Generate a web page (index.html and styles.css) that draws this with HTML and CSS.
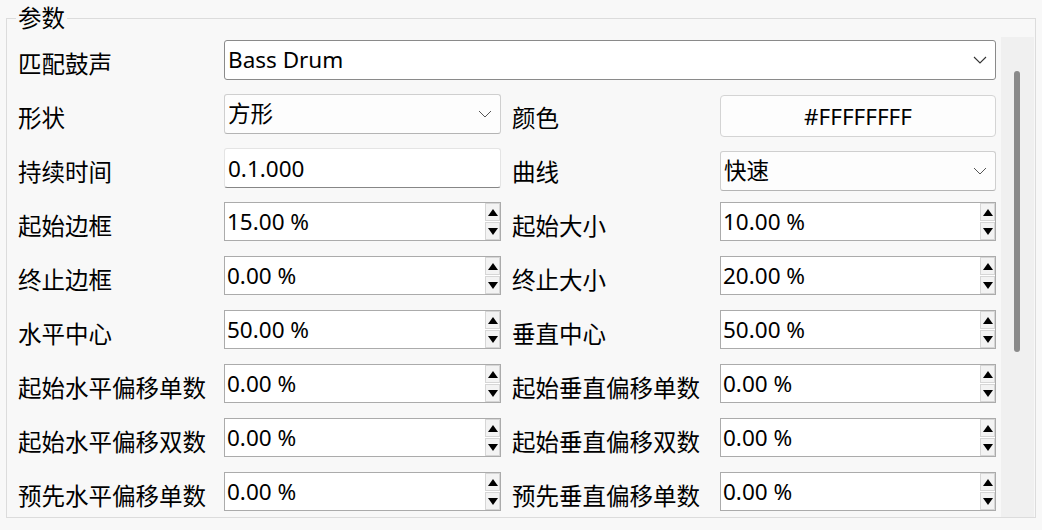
FILE: index.html
```html
<!DOCTYPE html>
<html lang="zh">
<head>
<meta charset="utf-8">
<link rel="stylesheet" href="styles.css">
</head>
<body>
<div class="group">
  <div class="group-title">参数</div>
  <div class="form">
    <div class="label">匹配鼓声</div>
    <div class="combo combo-main span3"><span class="val">Bass Drum</span><svg class="chev" width="14" height="8" viewBox="0 0 14 8"><path d="M1 1 L7 7 L13 1" fill="none" stroke="#333" stroke-width="1.1"/></svg></div>

    <div class="label">形状</div>
    <div class="combo"><span class="val">方形</span><svg class="chev" width="14" height="8" viewBox="0 0 14 8"><path d="M1 1 L7 7 L13 1" fill="none" stroke="#555" stroke-width="1"/></svg></div>
    <div class="label label-r">颜色</div>
    <div class="color-btn">#FFFFFFFF</div>

    <div class="label">持续时间</div>
    <div class="lineedit">0.1.000</div>
    <div class="label label-r">曲线</div>
    <div class="combo combo-shift"><span class="val">快速</span><svg class="chev" width="14" height="8" viewBox="0 0 14 8"><path d="M1 1 L7 7 L13 1" fill="none" stroke="#555" stroke-width="1"/></svg></div>

    <div class="label">起始边框</div>
    <div class="spin"><span class="val">15.00 %</span><div class="spin-btns"><div class="sb"><i class="up"></i></div><div class="sb"><i class="down"></i></div></div></div>
    <div class="label label-r">起始大小</div>
    <div class="spin"><span class="val">10.00 %</span><div class="spin-btns"><div class="sb"><i class="up"></i></div><div class="sb"><i class="down"></i></div></div></div>

    <div class="label">终止边框</div>
    <div class="spin"><span class="val">0.00 %</span><div class="spin-btns"><div class="sb"><i class="up"></i></div><div class="sb"><i class="down"></i></div></div></div>
    <div class="label label-r">终止大小</div>
    <div class="spin"><span class="val">20.00 %</span><div class="spin-btns"><div class="sb"><i class="up"></i></div><div class="sb"><i class="down"></i></div></div></div>

    <div class="label">水平中心</div>
    <div class="spin"><span class="val">50.00 %</span><div class="spin-btns"><div class="sb"><i class="up"></i></div><div class="sb"><i class="down"></i></div></div></div>
    <div class="label label-r">垂直中心</div>
    <div class="spin"><span class="val">50.00 %</span><div class="spin-btns"><div class="sb"><i class="up"></i></div><div class="sb"><i class="down"></i></div></div></div>

    <div class="label">起始水平偏移单数</div>
    <div class="spin"><span class="val">0.00 %</span><div class="spin-btns"><div class="sb"><i class="up"></i></div><div class="sb"><i class="down"></i></div></div></div>
    <div class="label label-r">起始垂直偏移单数</div>
    <div class="spin"><span class="val">0.00 %</span><div class="spin-btns"><div class="sb"><i class="up"></i></div><div class="sb"><i class="down"></i></div></div></div>

    <div class="label">起始水平偏移双数</div>
    <div class="spin"><span class="val">0.00 %</span><div class="spin-btns"><div class="sb"><i class="up"></i></div><div class="sb"><i class="down"></i></div></div></div>
    <div class="label label-r">起始垂直偏移双数</div>
    <div class="spin"><span class="val">0.00 %</span><div class="spin-btns"><div class="sb"><i class="up"></i></div><div class="sb"><i class="down"></i></div></div></div>

    <div class="label">预先水平偏移单数</div>
    <div class="spin"><span class="val">0.00 %</span><div class="spin-btns"><div class="sb"><i class="up"></i></div><div class="sb"><i class="down"></i></div></div></div>
    <div class="label label-r">预先垂直偏移单数</div>
    <div class="spin"><span class="val">0.00 %</span><div class="spin-btns"><div class="sb"><i class="up"></i></div><div class="sb"><i class="down"></i></div></div></div>
  </div>
  <div class="scrollbar"><div class="thumb"></div></div>
</div>
</body>
</html>
```

FILE: styles.css
```css
html, body {
  margin: 0;
  padding: 0;
  background: #f8f8f8;
}
body {
  width: 1042px;
  height: 530px;
  overflow: hidden;
  font-family: "Noto Sans", "Noto Sans CJK SC", sans-serif;
  color: #000;
}
.group {
  position: relative;
  box-sizing: border-box;
  margin: 18px 0 0 6px;
  width: 1030px;
  height: 500px;
  border: 1px solid #dcdcdc;
  display: flex;
  padding-top: 18px;
}
.group-title {
  position: absolute;
  top: -17px;
  left: 9px;
  padding: 0 2px;
  background: #f8f8f8;
  font-family: "Noto Sans CJK SC", sans-serif;
  font-size: 23.5px;
  line-height: 30px;
}
.form {
  flex: 1;
  padding: 3px 0 0 11px;
  overflow: hidden;
  display: grid;
  grid-template-columns: 206px 277px 219px 276px;
  grid-auto-rows: 40px;
  row-gap: 14px;
  align-content: start;
}
.label {
  font-family: "Noto Sans CJK SC", sans-serif;
  font-size: 23.5px;
  line-height: 30px;
  padding-top: 8px;
  white-space: nowrap;
}
.label-r {
  padding-left: 11px;
}
.span3 {
  grid-column: 2 / 5;
}
.val {
  font-size: 22.5px;
  line-height: 30px;
  white-space: nowrap;
}
.combo {
  box-sizing: border-box;
  height: 40px;
  display: flex;
  align-items: center;
  justify-content: space-between;
  padding: 0 8px 0 3px;
  background: #fdfdfd;
  border: 1px solid #cfcfcf;
  border-bottom-color: #b4b4b4;
  border-radius: 3px;
}
.combo-main {
  background: #fff;
  border-color: #8a8a8a;
  padding-right: 8px;
}
.combo-shift {
  margin-top: 3px;
}
.chev {
  display: block;
}
.color-btn {
  box-sizing: border-box;
  margin-top: 1px;
  height: 42px;
  display: flex;
  align-items: center;
  justify-content: center;
  font-size: 22.5px;
  background: #fdfdfd;
  border: 1px solid #d4d4d4;
  border-radius: 4px;
}
.lineedit {
  box-sizing: border-box;
  height: 40px;
  display: flex;
  align-items: center;
  padding: 0 3px;
  font-size: 22.5px;
  background: #fff;
  border: 1px solid #e4e4e4;
  border-bottom: 1px solid #868686;
  border-radius: 3px;
}
.spin {
  box-sizing: border-box;
  height: 39px;
  display: flex;
  align-items: center;
  justify-content: space-between;
  padding-left: 2px;
  background: #fff;
  border: 1px solid #ababab;
}
.spin-btns {
  align-self: stretch;
  display: flex;
  flex-direction: column;
  justify-content: space-between;
  width: 15px;
}
.sb {
  box-sizing: border-box;
  height: 18px;
  display: flex;
  align-items: center;
  justify-content: center;
  background: #f3f3f3;
  border: 1px solid #d6d6d6;
}
.up {
  width: 0;
  height: 0;
  border-left: 5.5px solid transparent;
  border-right: 5.5px solid transparent;
  border-bottom: 7px solid #000;
}
.down {
  width: 0;
  height: 0;
  border-left: 5.5px solid transparent;
  border-right: 5.5px solid transparent;
  border-top: 7px solid #000;
}
.scrollbar {
  width: 33px;
  margin-right: 1px;
  background: #f0f0f0;
  padding-top: 34px;
  box-sizing: border-box;
}
.thumb {
  width: 6px;
  height: 281px;
  margin-left: 13px;
  background: #8a8a8a;
  border-radius: 3px;
}
```
